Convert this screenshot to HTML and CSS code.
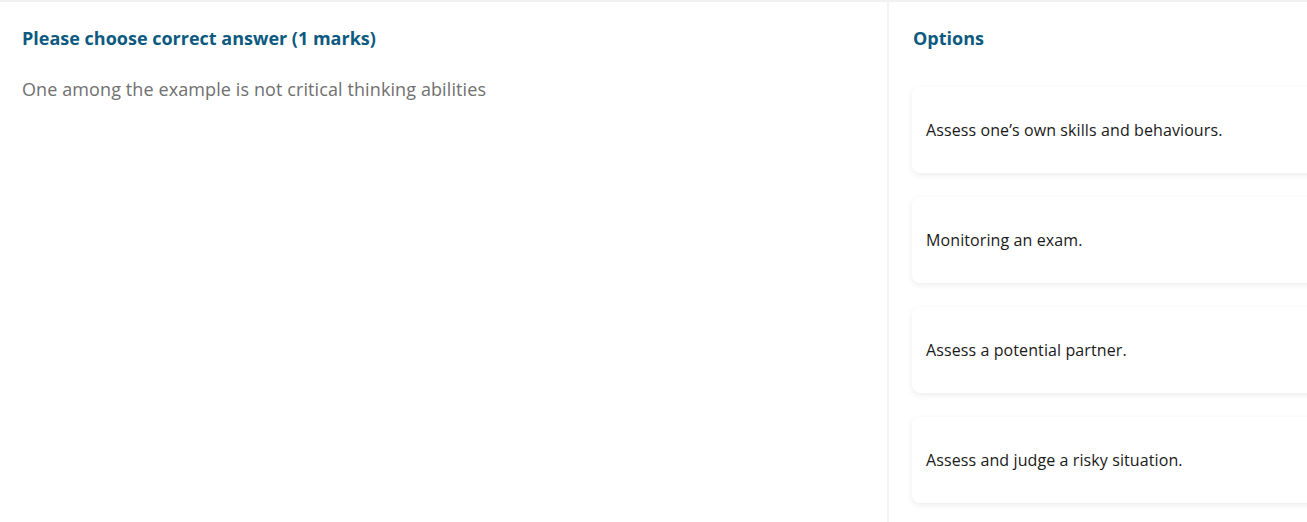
FILE: index.html
```html
<!DOCTYPE html>
<html lang="en">
<head>
<meta charset="utf-8">
<title>Question</title>
<link rel="stylesheet" href="styles.css">
</head>
<body>
<div class="page">
  <section class="question">
    <h2 class="title">Please choose correct answer (1 marks)</h2>
    <p class="prompt">One among the example is not critical thinking abilities</p>
  </section>
  <aside class="options">
    <h2 class="title">Options</h2>
    <div class="list">
      <div class="card">Assess one’s own skills and behaviours.</div>
      <div class="card">Monitoring an exam.</div>
      <div class="card">Assess a potential partner.</div>
      <div class="card">Assess and judge a risky situation.</div>
    </div>
  </aside>
</div>
</body>
</html>
```
FILE: styles.css
```css
html, body {
  margin: 0;
  padding: 0;
  background: #fff;
  overflow: hidden;
}
body {
  font-family: "Open Sans", "Noto Sans", sans-serif;
  width: 1307px;
  height: 522px;
}
.page {
  display: flex;
  height: 522px;
  border-top: 2px solid #f1f2f4;
  box-sizing: border-box;
}
.question {
  width: 889px;
  flex: none;
  padding: 0 22px;
  box-sizing: border-box;
  border-right: 2px solid #f3f3f3;
}
.title {
  margin: 0;
  padding-top: 24px;
  font-size: 18px;
  line-height: 24px;
  font-weight: 700;
  color: #0d5a80;
}
.prompt {
  margin: 27px 0 0;
  font-size: 18px;
  line-height: 24px;
  font-weight: 400;
  letter-spacing: 0.1px;
  color: #707070;
}
.options {
  flex: none;
  width: 440px;
  padding: 0 0 0 23px;
  box-sizing: border-box;
}
.options .title {
  padding-left: 1px;
}
.list {
  display: flex;
  flex-direction: column;
  gap: 24px;
  margin-top: 37px;
}
.card {
  height: 86px;
  display: flex;
  align-items: center;
  padding: 0 14px;
  border-radius: 8px;
  background: #fff;
  box-shadow: 0 2px 6px rgba(0, 0, 0, 0.08);
  font-size: 16px;
  letter-spacing: 0.1px;
  color: #1a1a1a;
}
```
